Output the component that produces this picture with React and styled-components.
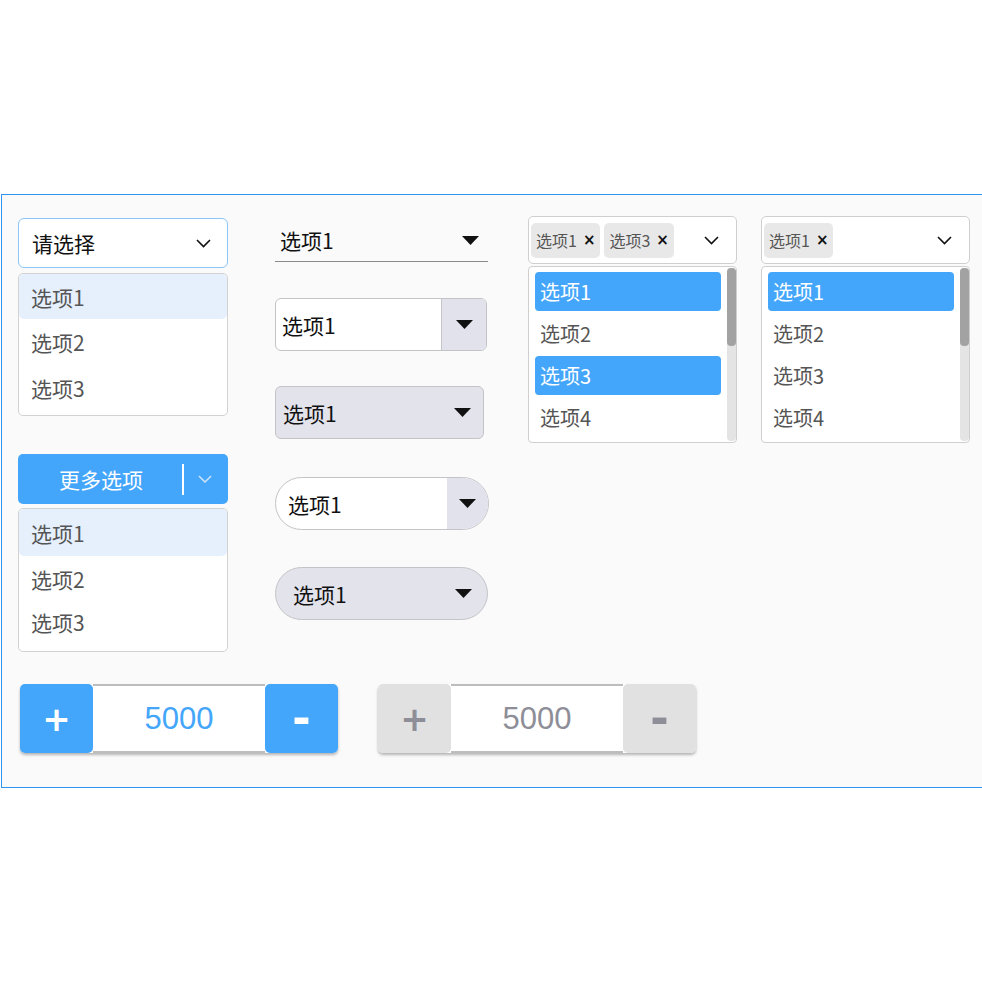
import React from 'react';
import styled, { createGlobalStyle } from 'styled-components';

const GlobalStyle = createGlobalStyle`
  html, body {
    margin: 0;
    padding: 0;
    background: #ffffff;
    overflow: hidden;
  }
  body {
    font-family: "Noto Sans CJK SC", "Noto Sans", "Liberation Sans", sans-serif;
  }
`;

const BLUE = '#44a6fa';

const Frame = styled.div`
  margin: 194px 0 0 1px;
  width: 1000px;
  box-sizing: border-box;
  border: 1px solid #2f93f0;
  background: #fafafa;
  padding: 23px 0 34px 16px;
`;

const Row = styled.div`
  display: flex;
  align-items: flex-start;
`;

const Column = styled.div`
  display: flex;
  flex-direction: column;
  width: ${(p) => p.$width}px;
  margin-left: ${(p) => p.$ml || 0}px;
  margin-top: ${(p) => p.$mt || 0}px;
`;

/* chevron + triangle icons */
const Chevron = ({ color = '#111', w = 15 }) => (
  <svg width={w} height={w * 0.6} viewBox="0 0 15 9">
    <path d="M1 1 L7.5 7.5 L14 1" fill="none" stroke={color} strokeWidth="1.6" />
  </svg>
);

const Triangle = () => (
  <svg width="17" height="9" viewBox="0 0 17 9">
    <path d="M0 0 H17 L8.5 9 Z" fill="#111" />
  </svg>
);

/* column 1 */
const SelectBox = styled.div`
  height: 50px;
  box-sizing: border-box;
  border: 1px solid #8cc6f8;
  border-radius: 6px;
  background: #fff;
  display: flex;
  align-items: center;
  justify-content: space-between;
  padding: 0 16px 0 13px;
  font-size: 21px;
  color: #111;
`;

const List = styled.div`
  margin-top: ${(p) => p.$mt}px;
  height: ${(p) => p.$h}px;
  box-sizing: border-box;
  border: 1px solid #d2d2d2;
  border-radius: 5px;
  background: #fff;
  display: flex;
  flex-direction: column;
`;

const ListItem = styled.div`
  height: ${(p) => p.$h}px;
  display: flex;
  align-items: center;
  padding-left: 12px;
  font-size: 21px;
  color: #555;
  background: ${(p) => (p.$active ? '#e6f0fd' : 'transparent')};
  border-radius: ${(p) => (p.$active ? '5px' : '0')};
`;

const SplitButton = styled.div`
  margin-top: 38px;
  height: 50px;
  border-radius: 5px;
  background: ${BLUE};
  display: flex;
  align-items: center;
  color: #fff;
  font-size: 21px;
`;

const SplitLabel = styled.div`
  flex: 1;
  text-align: center;
  padding-left: 2px;
`;

const Divider = styled.div`
  width: 2px;
  height: 31px;
  background: #fff;
  margin-right: 14px;
`;

const SplitArrow = styled.div`
  width: 30px;
  display: flex;
  align-items: center;
`;

/* column 2 */
const UnderlineSelect = styled.div`
  height: 43px;
  box-sizing: border-box;
  border-bottom: 1px solid #8a8a8a;
  display: flex;
  align-items: center;
  justify-content: space-between;
  padding: 0 9px 0 5px;
  font-size: 21px;
  color: #111;
`;

const BoxSelect = styled.div`
  margin-top: ${(p) => p.$mt}px;
  width: ${(p) => p.$w}px;
  height: 53px;
  box-sizing: border-box;
  border: 1px solid #c4c4c8;
  border-radius: ${(p) => (p.$pill ? '27px' : '6px')};
  background: ${(p) => (p.$grey ? '#e3e3ec' : '#fff')};
  display: flex;
  align-items: center;
  overflow: hidden;
  font-size: 21px;
  color: #111;
`;

const BoxText = styled.div`
  flex: 1;
  padding-left: ${(p) => p.$pl}px;
`;

const ArrowCell = styled.div`
  width: ${(p) => p.$w}px;
  align-self: stretch;
  display: flex;
  align-items: center;
  justify-content: center;
  background: #e2e2ec;
  border-left: ${(p) => (p.$line ? '1px solid #c4c4c8' : 'none')};
`;

const PlainArrow = styled.div`
  padding-right: ${(p) => p.$pr}px;
  display: flex;
  align-items: center;
`;

/* columns 3, 4 */
const MultiBox = styled.div`
  height: 48px;
  box-sizing: border-box;
  border: 1px solid #cfcfcf;
  border-radius: 5px;
  background: #fff;
  display: flex;
  align-items: center;
  padding: 0 17px 0 2px;
`;

const Tag = styled.div`
  height: 35px;
  margin-right: 4px;
  padding: 0 5px 0 5px;
  border-radius: 5px;
  background: #e8e8e8;
  display: flex;
  align-items: center;
  gap: 6px;
  font-size: 16px;
  color: #555;
`;

const TagX = styled.span`
  font-family: "DejaVu Sans", sans-serif;
  font-size: 15px;
  font-weight: bold;
  color: #111;
`;

const Spacer = styled.div`
  flex: 1;
`;

const ScrollList = styled.div`
  margin-top: 2px;
  height: 177px;
  box-sizing: border-box;
  border: 1px solid #cfcfcf;
  border-radius: 4px;
  background: #fff;
  display: flex;
  overflow: hidden;
`;

const ScrollItems = styled.div`
  flex: 1;
  padding: 5px 6px 0 6px;
  display: flex;
  flex-direction: column;
  gap: 3px;
`;

const ScrollItem = styled.div`
  height: 39px;
  flex-shrink: 0;
  border-radius: 4px;
  display: flex;
  align-items: center;
  padding-left: 5px;
  font-size: 20px;
  color: ${(p) => (p.$active ? '#fff' : '#555')};
  background: ${(p) => (p.$active ? BLUE : 'transparent')};
`;

const Track = styled.div`
  width: 9px;
  background: #e4e4e4;
  border-radius: 4px;
  margin: 1px 0;
`;

const Thumb = styled.div`
  height: 78px;
  background: #a2a2a2;
  border-radius: 4px;
`;

/* steppers */
const StepRow = styled.div`
  display: flex;
  gap: 40px;
  margin-top: 32px;
  padding-left: 2px;
`;

const Stepper = styled.div`
  width: 318px;
  height: 69px;
  display: flex;
  border-radius: 5px;
  box-shadow: 0 2px 3px rgba(0, 0, 0, 0.28);
  background: #fff;
`;

const StepButton = styled.div`
  width: 73px;
  border-radius: 5px;
  display: flex;
  align-items: center;
  justify-content: center;
  padding-bottom: ${(p) => (p.$minus ? 6 : 0)}px;
  box-sizing: border-box;
  background: ${(p) => (p.$disabled ? '#e1e1e1' : BLUE)};
  color: ${(p) => (p.$disabled ? '#8e8e98' : '#fff')};
  font-family: ${(p) => (p.$minus ? '"Liberation Sans", Arial' : '"DejaVu Sans"')}, sans-serif;
  font-weight: bold;
  font-size: ${(p) => (p.$minus ? 54 : 34)}px;
  line-height: 1;
`;

const StepValue = styled.div`
  flex: 1;
  box-sizing: border-box;
  border-top: 2px solid #bdbdbd;
  border-bottom: 2px solid #bdbdbd;
  display: flex;
  align-items: center;
  justify-content: center;
  font-family: "Liberation Sans", Arial, sans-serif;
  font-size: 31px;
  color: ${(p) => (p.$disabled ? '#8e8e98' : BLUE)};
`;

const MultiSelect = ({ tags, items, active }) => (
  <>
    <MultiBox>
      {tags.map((t) => (
        <Tag key={t}>
          {t}
          <TagX>×</TagX>
        </Tag>
      ))}
      <Spacer />
      <Chevron />
    </MultiBox>
    <ScrollList>
      <ScrollItems>
        {items.map((it) => (
          <ScrollItem key={it} $active={active.includes(it)}>
            {it}
          </ScrollItem>
        ))}
      </ScrollItems>
      <Track>
        <Thumb />
      </Track>
    </ScrollList>
  </>
);

const StepperBox = ({ disabled }) => (
  <Stepper>
    <StepButton $disabled={disabled}>+</StepButton>
    <StepValue $disabled={disabled}>5000</StepValue>
    <StepButton $disabled={disabled} $minus>-</StepButton>
  </Stepper>
);

export default function App() {
  const opts = ['选项1', '选项2', '选项3', '选项4'];
  return (
    <>
      <GlobalStyle />
      <Frame>
        <Row>
          <Column $width={210}>
            <SelectBox>
              请选择
              <Chevron />
            </SelectBox>
            <List $mt={5} $h={143}>
              <ListItem $active $h={45}>选项1</ListItem>
              <ListItem $h={46}>选项2</ListItem>
              <ListItem $h={46}>选项3</ListItem>
            </List>
            <SplitButton>
              <SplitLabel>更多选项</SplitLabel>
              <Divider />
              <SplitArrow>
                <Chevron color="#cfe3f8" w={14} />
              </SplitArrow>
            </SplitButton>
            <List $mt={4} $h={144}>
              <ListItem $active $h={47}>选项1</ListItem>
              <ListItem $h={46}>选项2</ListItem>
              <ListItem $h={40}>选项3</ListItem>
            </List>
          </Column>

          <Column $width={213} $ml={47} $mt={1}>
            <UnderlineSelect>
              选项1
              <Triangle />
            </UnderlineSelect>
            <BoxSelect $mt={36} $w={212}>
              <BoxText $pl={6}>选项1</BoxText>
              <ArrowCell $w={44} $line>
                <Triangle />
              </ArrowCell>
            </BoxSelect>
            <BoxSelect $mt={35} $w={209} $grey>
              <BoxText $pl={7}>选项1</BoxText>
              <PlainArrow $pr={12}>
                <Triangle />
              </PlainArrow>
            </BoxSelect>
            <BoxSelect $mt={38} $w={214} $pill>
              <BoxText $pl={12}>选项1</BoxText>
              <ArrowCell $w={41}>
                <Triangle />
              </ArrowCell>
            </BoxSelect>
            <BoxSelect $mt={37} $w={213} $pill $grey>
              <BoxText $pl={17}>选项1</BoxText>
              <PlainArrow $pr={15}>
                <Triangle />
              </PlainArrow>
            </BoxSelect>
          </Column>

          <Column $width={209} $ml={40} $mt={-2}>
            <MultiSelect tags={['选项1', '选项3']} items={opts} active={['选项1', '选项3']} />
          </Column>

          <Column $width={209} $ml={24} $mt={-2}>
            <MultiSelect tags={['选项1']} items={opts} active={['选项1']} />
          </Column>
        </Row>

        <StepRow>
          <StepperBox />
          <StepperBox disabled />
        </StepRow>
      </Frame>
    </>
  );
}
